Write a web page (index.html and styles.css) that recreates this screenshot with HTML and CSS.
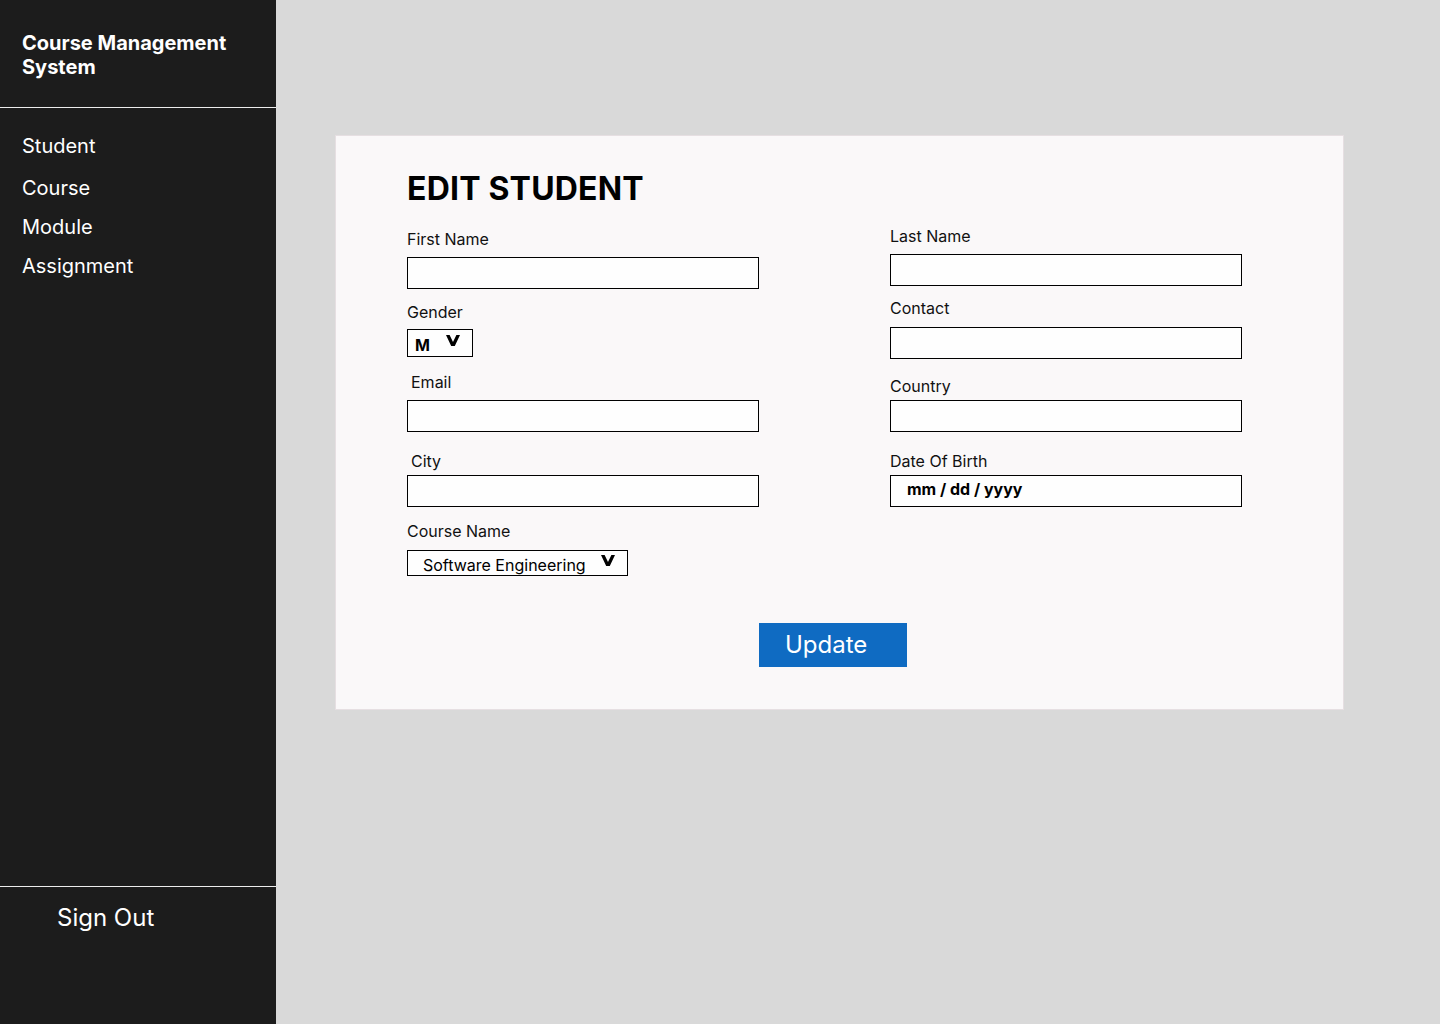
FILE: index.html
```html
<!DOCTYPE html>
<html lang="en">
<head>
<meta charset="utf-8">
<title>Edit Student</title>
<link rel="stylesheet" href="styles.css">
</head>
<body>
<div class="app">
  <aside class="sidebar">
    <div class="brand">Course Management System</div>
    <nav class="nav">
      <a class="nav-item nav-student">Student</a>
      <a class="nav-item nav-course">Course</a>
      <a class="nav-item">Module</a>
      <a class="nav-item">Assignment</a>
    </nav>
    <div class="signout">Sign Out</div>
  </aside>
  <main class="main">
    <section class="card">
      <h1 class="title">EDIT STUDENT</h1>
      <div class="cols">
        <div class="col col-left">
          <div class="field f-first">
            <label class="label">First Name</label>
            <div class="input"></div>
          </div>
          <div class="field f-gender">
            <label class="label label-gender">Gender</label>
            <div class="select select-gender">
              <span class="sel-text sel-m">M</span>
              <svg class="chev" width="14" height="11" viewBox="0 0 14 11"><path d="M0 0 H3.6 L7 7 L10.4 0 H14 L8.8 11 H5.2 Z" fill="#000"/></svg>
            </div>
          </div>
          <div class="field f-email">
            <label class="label label-indent">Email</label>
            <div class="input"></div>
          </div>
          <div class="field f-city">
            <label class="label label-indent label-city">City</label>
            <div class="input"></div>
          </div>
          <div class="field f-course">
            <label class="label label-course">Course Name</label>
            <div class="select select-course">
              <span class="sel-text sel-course">Software Engineering</span>
              <svg class="chev" width="14" height="11" viewBox="0 0 14 11"><path d="M0 0 H3.6 L7 7 L10.4 0 H14 L8.8 11 H5.2 Z" fill="#000"/></svg>
            </div>
          </div>
        </div>
        <div class="col col-right">
          <div class="field f-last">
            <label class="label">Last Name</label>
            <div class="input"></div>
          </div>
          <div class="field f-contact">
            <label class="label label-contact">Contact</label>
            <div class="input"></div>
          </div>
          <div class="field f-country">
            <label class="label label-country">Country</label>
            <div class="input"></div>
          </div>
          <div class="field f-dob">
            <label class="label label-dob">Date Of Birth</label>
            <div class="input input-date">mm / dd / yyyy</div>
          </div>
        </div>
      </div>
      <button class="btn">Update</button>
    </section>
  </main>
</div>
</body>
</html>
```

FILE: styles.css
```css
* { box-sizing: border-box; }
html, body { margin: 0; padding: 0; }
body {
  font-family: Inter, "Noto Sans", Roboto, sans-serif;
  background: #d9d9d9;
  color: #000;
}
.app {
  display: flex;
  width: 1440px;
  height: 1024px;
}
.sidebar {
  width: 276px;
  flex: none;
  background: #1c1c1c;
  color: #fff;
  display: flex;
  flex-direction: column;
}
.brand {
  font-weight: 700;
  font-size: 20px;
  line-height: 24px;
  padding: 31px 22px 0 22px;
  height: 108px;
  border-bottom: 1px solid #ececec;
}
.nav {
  flex: 1;
  display: flex;
  flex-direction: column;
  padding: 26px 22px 0 22px;
  gap: 15px;
}
.nav-item {
  font-size: 20px;
  line-height: 24px;
  color: #fff;
  text-decoration: none;
}
.nav-student { margin-bottom: 3px; }
.signout {
  height: 138px;
  border-top: 1px solid #ececec;
  padding: 16px 0 0 57px;
  font-size: 24px;
  line-height: 30px;
}
.main {
  flex: 1;
  padding: 135px 0 0 59px;
}
.card {
  width: 1009px;
  height: 575px;
  background: #faf8f9;
  border: 1px solid #e6dfe2;
  padding: 33px 0 0 71px;
}
.title {
  margin: 0;
  font-size: 32px;
  line-height: 40px;
  font-weight: 700;
  letter-spacing: 0.2px;
}
.cols {
  display: flex;
  gap: 131px;
}
.col {
  width: 352px;
  display: flex;
  flex-direction: column;
}
.col-left { margin-top: 20px; }
.col-right { margin-top: 17px; }
.field { display: flex; flex-direction: column; }
.label {
  font-size: 16px;
  line-height: 20px;
  margin-bottom: 8px;
  color: #111;
}
.label-indent { padding-left: 4px; }
.label-gender { margin-bottom: 7px; }
.label-city { margin-bottom: 4px; }
.label-course { margin-bottom: 9px; }
.label-contact { margin-bottom: 9px; }
.label-country { margin-bottom: 4px; }
.label-dob { margin-bottom: 4px; }
.input {
  height: 32px;
  width: 352px;
  border: 1px solid #000;
  background: #fefefe;
}
.input-date {
  font-weight: 700;
  font-size: 16px;
  line-height: 26px;
  padding-left: 16px;
}
.f-gender { margin-top: 13px; }
.f-email { margin-top: 15px; }
.f-city { margin-top: 19px; }
.f-course { margin-top: 14px; }
.f-contact { margin-top: 12px; }
.f-country { margin-top: 17px; }
.f-dob { margin-top: 19px; }
.select {
  border: 1px solid #000;
  background: #fefefe;
  display: flex;
  align-items: flex-start;
}
.select-gender {
  width: 66px;
  height: 28px;
}
.select-course {
  width: 221px;
  height: 26px;
}
.sel-m {
  font-weight: 700;
  font-size: 16px;
  line-height: 20px;
  margin: 5px 0 0 7px;
}
.sel-course {
  font-size: 16px;
  line-height: 20px;
  margin: 4px 0 0 15px;
}
.chev { flex: none; }
.select-gender .chev { margin: 5px 0 0 16px; }
.select-course .chev { margin: 4px 0 0 15px; }
.btn {
  margin: 47px 0 0 352px;
  width: 148px;
  height: 44px;
  border: none;
  background: #0f6bc2;
  color: #fff;
  font-family: Inter, "Noto Sans", sans-serif;
  font-size: 24px;
  line-height: 30px;
  padding: 0 0 0 26px;
  text-align: left;
  display: block;
}
```
